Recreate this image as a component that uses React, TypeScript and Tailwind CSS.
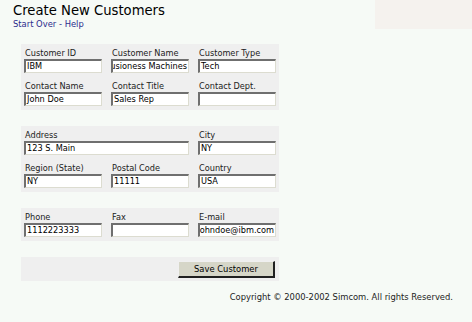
const font = { fontFamily: '"DejaVu Sans", Verdana, sans-serif' };

function Field({ label, value, wide, end }: { label: string; value: string; wide?: boolean; end?: boolean }) {
  return (
    <div className={wide ? 'col-span-2 flex flex-col' : 'flex flex-col'}>
      <span className="text-[8.2px] leading-[10px] text-[#222] pl-[1px] whitespace-nowrap">{label}</span>
      <div
        className={`mt-[1px] h-[14px] flex ${end ? 'justify-end' : 'justify-start'} bg-white border-t-[2px] border-l-[2px] border-b border-r border-t-[#6f6f6f] border-l-[#6f6f6f] border-b-[#dcdcd0] border-r-[#dcdcd0] overflow-hidden whitespace-nowrap text-[8.2px] leading-[11px] px-[1px] text-black`}
      >
        <span className="shrink-0">{value}</span>
      </div>
    </div>
  );
}

function Panel({ children }: { children: React.ReactNode }) {
  return (
    <div className="w-[258px] bg-[#efefef] px-[3px] pt-[4px] pb-[4px]">
      <div className="grid grid-cols-[78px_78px_78px] gap-x-[9px] gap-y-[8px]">{children}</div>
    </div>
  );
}

export default function App() {
  return (
    <div className="relative w-[472px] h-[322px] bg-[#f6faf6] overflow-hidden" style={font}>
      <div className="absolute right-0 top-0 w-[97px] h-[29px] bg-[#f5f2ee]" />
      <div className="relative pl-[13px] pt-[3px]">
        <h1 className="text-[13.2px] leading-[16px] text-black">Create New Customers</h1>
        <div className="text-[8.4px] leading-[10px] text-[#2b2b8c]">
          <span>Start Over</span> - <span>Help</span>
        </div>
      </div>
      <div className="flex flex-col gap-[16px] pl-[21px] mt-[15px]">
        <Panel>
          <Field label="Customer ID" value="IBM" />
          <Field label="Customer Name" value="usioness Machines" end />
          <Field label="Customer Type" value="Tech" />
          <Field label="Contact Name" value="John Doe" />
          <Field label="Contact Title" value="Sales Rep" />
          <Field label="Contact Dept." value="" />
        </Panel>
        <Panel>
          <Field label="Address" value="123 S. Main" wide />
          <Field label="City" value="NY" />
          <Field label="Region (State)" value="NY" />
          <Field label="Postal Code" value="11111" />
          <Field label="Country" value="USA" />
        </Panel>
        <Panel>
          <Field label="Phone" value="1112223333" />
          <Field label="Fax" value="" />
          <Field label="E-mail" value="ohndoe@ibm.com" end />
        </Panel>
        <div className="w-[258px] h-[24px] bg-[#efefef] flex items-center justify-end pr-[4px]">
          <button className="w-[97px] h-[17px] bg-[#d6d6c8] border border-t-[#f0f0f0] border-l-[#f0f0f0] border-b-[#202020] border-r-[#202020] border-b-[2px] border-r-[2px] text-[8.4px] leading-[12px] text-black">
            Save Customer
          </button>
        </div>
      </div>
      <div className="absolute right-[19px] top-[292px] text-[8.4px] leading-[11px] text-[#222]">
        Copyright © 2000-2002 Simcom. All rights Reserved.
      </div>
    </div>
  );
}
